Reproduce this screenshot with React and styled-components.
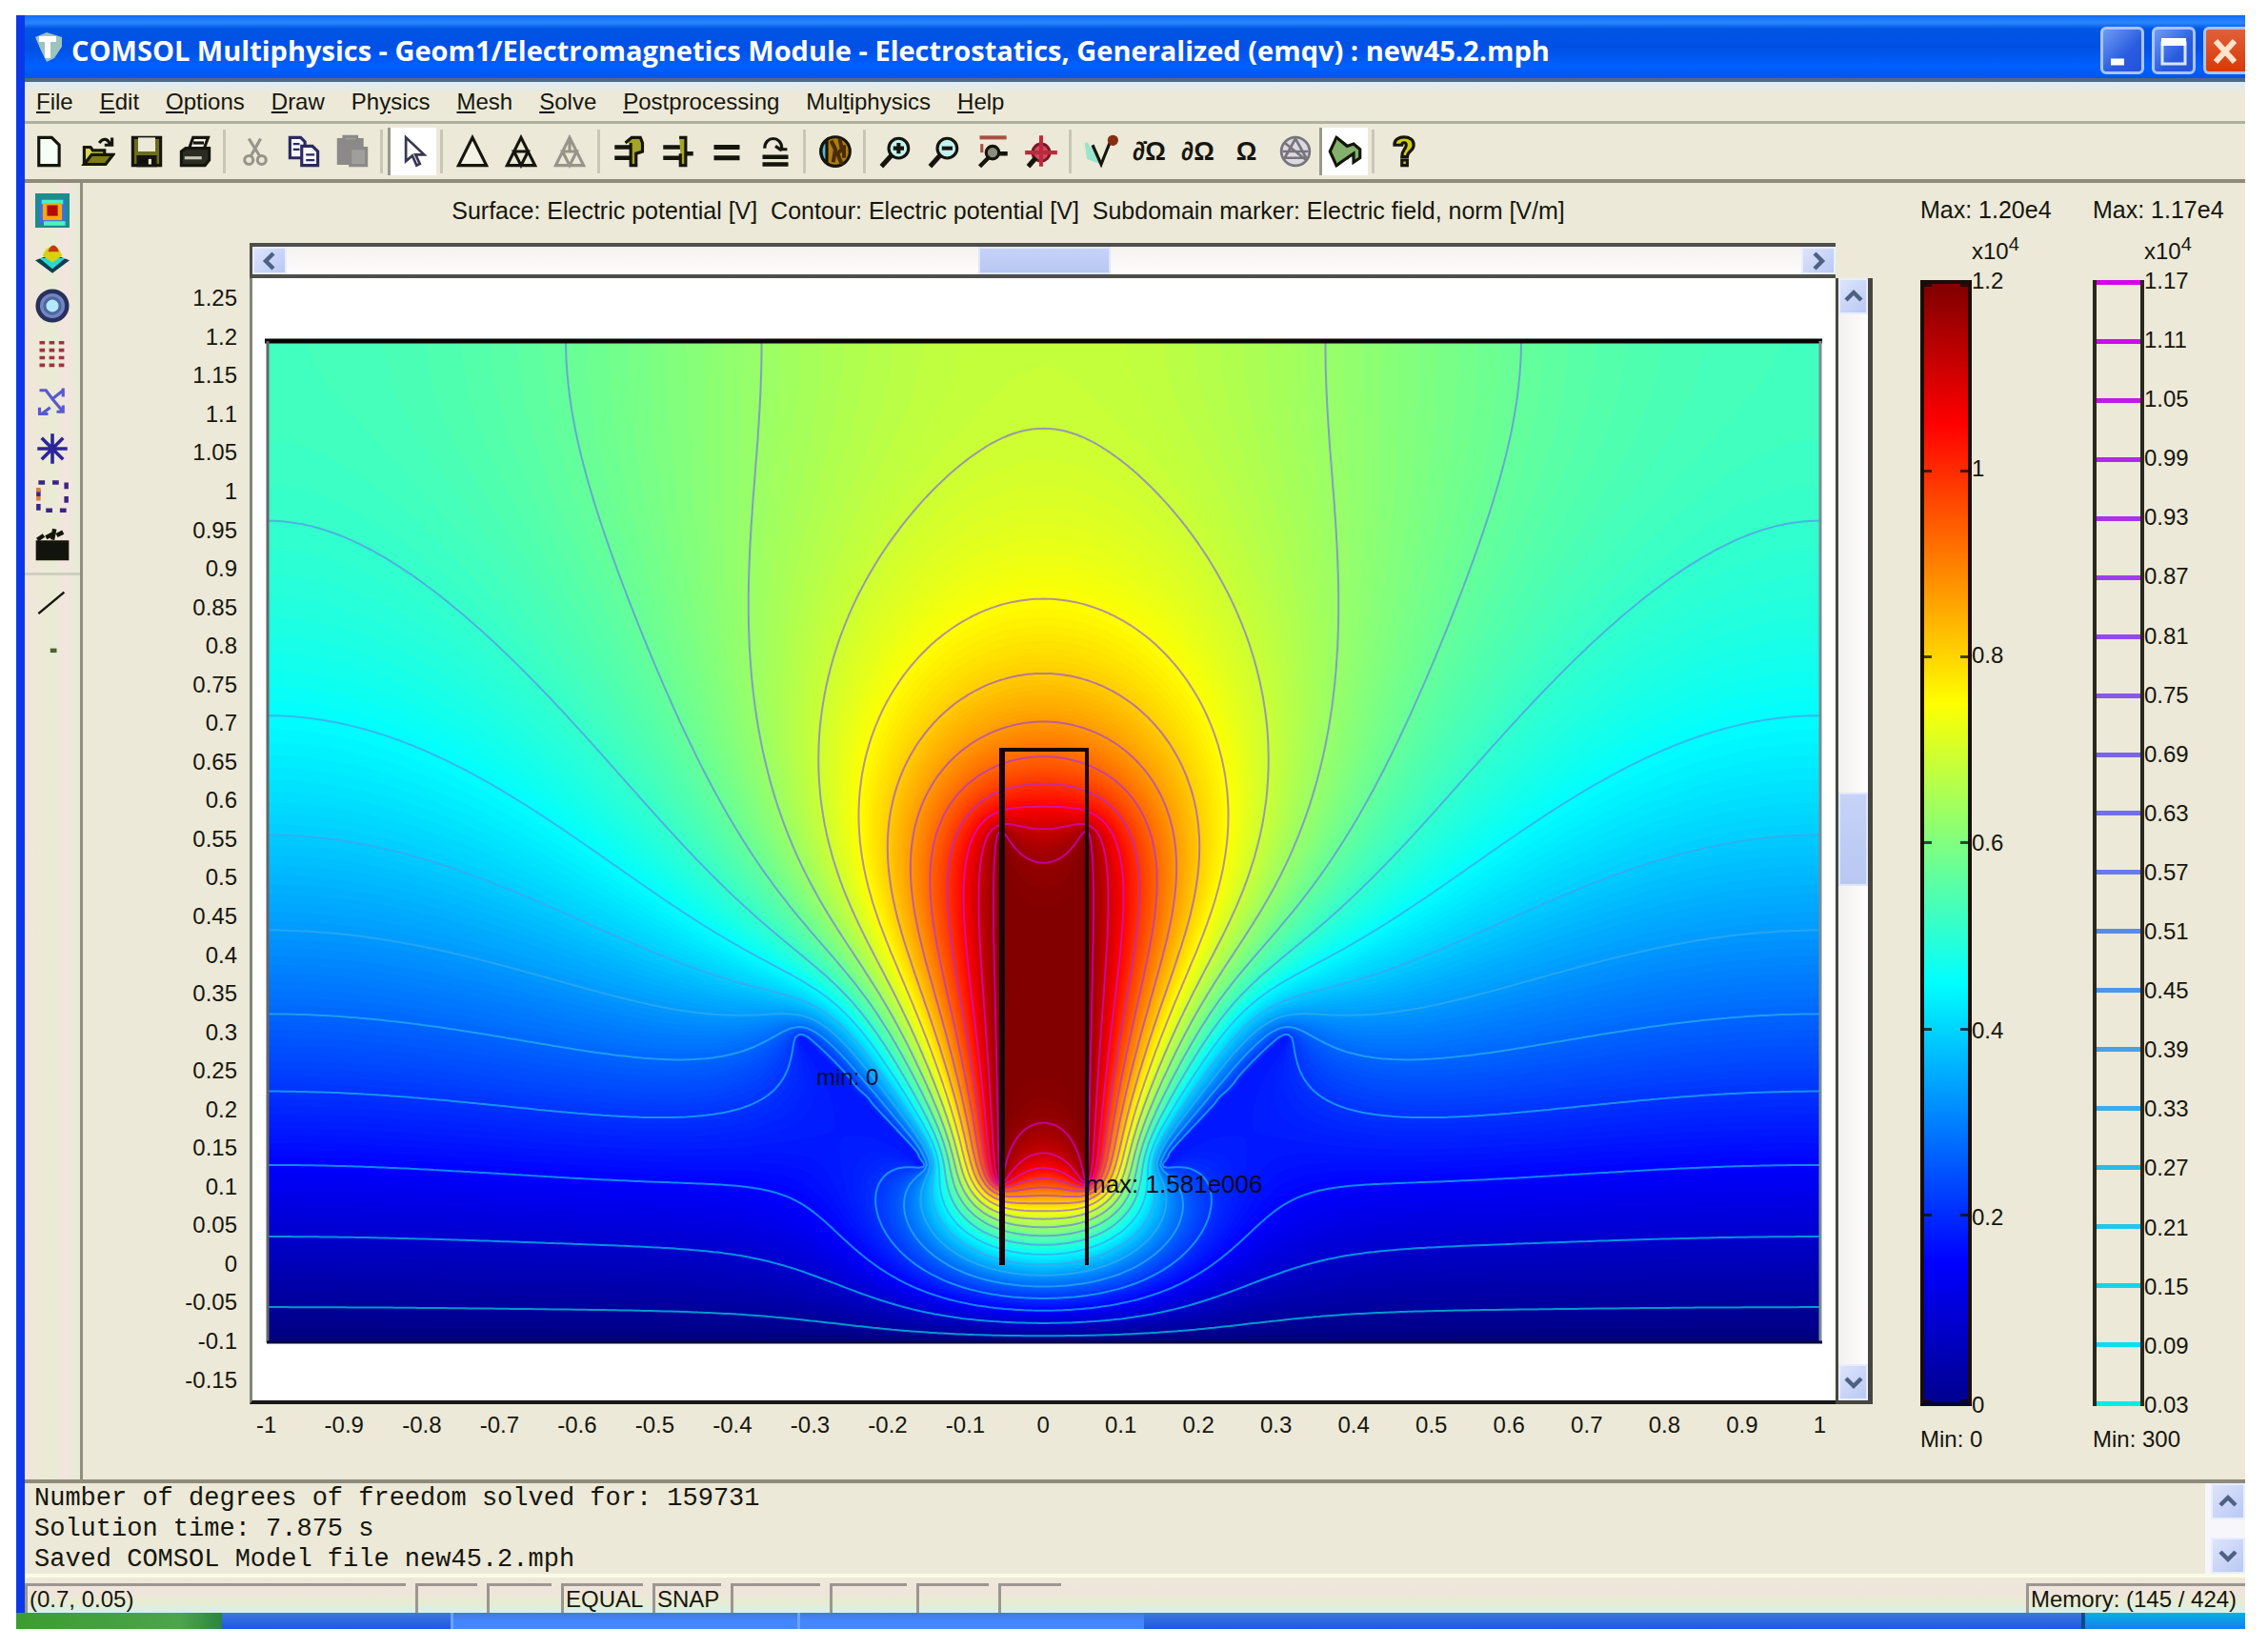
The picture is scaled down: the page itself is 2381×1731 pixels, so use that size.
import { useMemo } from 'react';
import styled, { createGlobalStyle } from 'styled-components';

const GlobalStyle = createGlobalStyle`
  *, *::before, *::after {
    box-sizing: border-box;
  }

  body {
    margin: 0;
    background: #fff;
    color: #16160e;
    font-family: "Liberation Sans", Arial, sans-serif;
    font-size: 24px;
  }

  button {
    margin: 0;
    padding: 0;
    border: 0;
    background: none;
    color: inherit;
    font: inherit;
  }
`

const Page = styled.div`
  padding: 16px 24px 20px 17px;
`

const Window = styled.main`
  display: flex;
  flex-direction: column;
  background: #ece9d8;
  overflow: hidden;
`

const WindowBody = styled.div`
  border-left: 9px solid #0b38e8;
`

/* title bar */

const TitleBar = styled.header`
  display: flex;
  align-items: center;
  height: 70px;
  padding-left: 9px;
  border-bottom: 4px solid #4f6a86;
  background: linear-gradient(#0f6cf8 0, #2a86ff 8px, #0056e4 14px, #0050e4 34px, #0060ff 54px, #0055f0 66px);
  color: #fff;
  overflow: hidden;
`

const Title = styled.h1`
  flex: 1;
  margin: 0 0 0 8px;
  padding-top: 8px;
  font-family: "Open Sans", sans-serif;
  font-size: 29px;
  font-weight: 700;
  line-height: 36px;
  white-space: nowrap;
`

const WindowButtons = styled.div`
  display: flex;
  gap: 8px;
  padding-top: 8px;
`

const WindowButton = styled.button`
  display: flex;
  width: 46px;
  height: 50px;
  border: 3px solid #a8c4ff;
  border-radius: 6px;
  background: ${(props) => (props.$danger ? 'linear-gradient(#e0603a, #d83a08)' : 'linear-gradient(135deg, #6f9cf4, #2a5ce0 60%, #2352d8)')};

  &:last-child {
    width: 44px;
    border-right: 0;
    border-radius: 6px 0 0 6px;
  }
`

/* menu and toolbars */

const MenuBar = styled.nav`
  display: flex;
  align-items: center;
  gap: 28px;
  height: 44px;
  padding-left: 12px;
  border-bottom: 3px solid #aeb0a0;
  background: linear-gradient(#dcecf6, #ece9d8 12px);
`

const MenuItem = styled.button`
  line-height: 28px;
`

const Toolbar = styled.div`
  display: flex;
  align-items: center;
  height: 62px;
  border-bottom: 4px solid #8e8b7a;
`

const ToolButton = styled.button`
  display: flex;
  align-items: center;
  justify-content: center;
  flex: none;
  width: 51px;
  height: 50px;
  background: ${(props) => (props.$pressed ? '#fff' : 'transparent')};
  border-left: ${(props) => (props.$pressed ? '3px solid #9a988a' : '0')};
`

const Separator = styled.span`
  width: 3px;
  height: 46px;
  margin: 0 5px 0 4px;
  background: #c9c6b6;
`

const Main = styled.div`
  display: flex;
`

const SideBar = styled.div`
  display: flex;
  flex-direction: column;
  align-items: center;
  width: 61px;
  padding-top: 4px;
  border-right: 3px solid #908e80;
  background: linear-gradient(90deg, #f4e4dc, #e8ecd4 50%, #f4e4e0 75%, #e4ecd4);
`

const SideButton = styled.button`
  display: flex;
  align-items: center;
  justify-content: center;
  width: 50px;
  height: 50px;
`

const SideRule = styled.span`
  width: 100%;
  height: 3px;
  margin: 5px 0;
  background: #cfcfc0;
`

/* plot */

const PlotPane = styled.section`
  display: grid;
  flex: 1;
  grid-template-columns: 175px minmax(0, 1fr) 39px 50px;
  grid-template-rows: 63px 37px auto 79px;
`

const PlotTitle = styled.h2`
  grid-column: 1 / -1;
  margin: 0;
  padding: 14px 0 0 14px;
  font-size: 25px;
  font-weight: 400;
  line-height: 30px;
  text-align: center;
  white-space: pre;
`

const ScrollX = styled.div`
  display: flex;
  grid-column: 2;
  justify-content: space-between;
  border: solid #4e4e4a;
  border-width: 4px 0 4px 3px;
  background: linear-gradient(#f5f2ef, #fdfdfd);
`

const ScrollY = styled.div`
  display: flex;
  flex-direction: column;
  grid-column: 3;
  justify-content: space-between;
  border: solid #46463f;
  border-width: 0 5px 4px 3px;
  background: linear-gradient(90deg, #f3f0ef, #fdfdfd);
`

const ScrollArrow = styled.button`
  display: flex;
  align-items: center;
  justify-content: center;
  min-width: ${(props) => (props.$tall ? 31 : 36)}px;
  height: ${(props) => (props.$tall ? 38 : 29)}px;
  border: 2px solid #e8eeff;
  background: linear-gradient(135deg, #dde4fb, #b9c9f4);
`

const Thumb = styled.span`
  width: ${(props) => (props.$vertical ? 'auto' : '139px')};
  height: ${(props) => (props.$vertical ? '98px' : 'auto')};
  border: 2px solid #dfe6fc;
  background: linear-gradient(#c6d2f8, #b8c8f2);
`

const YAxis = styled.ol`
  display: flex;
  flex-direction: column;
  grid-column: 1;
  margin: 0;
  padding: 1px 13px 5px 0;
  list-style: none;
`

const YTick = styled.li`
  display: flex;
  flex: 1;
  align-items: center;
  justify-content: flex-end;
  line-height: 28px;
`

const XAxis = styled.ol`
  display: flex;
  grid-column: 1 / -1;
  margin: 0;
  padding: 8px 65px 0 152px;
  list-style: none;
`

const XTick = styled.li`
  flex: 1;
  line-height: 28px;
  text-align: center;
`

const PlotFrame = styled.div`
  grid-column: 2;
  border: solid #1a1816;
  border-width: 0 0 4px 3px;
  border-left-color: #85857c;
  background: #fff;
`

const PlotSvg = styled.svg`
  display: block;
  width: 100%;
  height: auto;
`

/* legends */

const Legend = styled.section`
  display: flex;
  flex-direction: column;
  width: ${(props) => props.$width}px;
`

const LegendHead = styled.div`
  height: 102px;
  padding-top: 14px;
  font-size: 25px;
  line-height: 28px;
  white-space: nowrap;
`

const Exponent = styled.div`
  padding: 14px 0 0 54px;
  font-size: 24px;
  line-height: 32px;
`

const Power = styled.sup`
  font-size: 20px;
  line-height: 0;
`

const LegendBody = styled.div`
  display: flex;
  flex: 1;
`

const ColorBar = styled.div`
  display: flex;
  flex-direction: column;
  justify-content: space-between;
  width: 54px;
  border: 4px solid #1a0c08;
  border-bottom-color: #00003c;
  background: linear-gradient(#800000, #f00 12.5%, #ff0 37.5%, #0ff 62.5%, #00f 87.5%, #00008f);
`

const BarTick = styled.span`
  height: 3px;
  border: solid rgba(20, 10, 10, 0.75);
  border-width: 0 8px;
`

const LineBar = styled.div`
  display: flex;
  flex-direction: column;
  justify-content: space-between;
  width: 54px;
  border: solid #2a271d;
  border-width: 0 4px;
`

const LineKey = styled.span`
  height: 5px;
  background: ${(props) => props.$color};
`

const Scale = styled.ol`
  display: flex;
  flex-direction: column;
  justify-content: space-between;
  margin: -13px 0;
  padding: 0;
  line-height: 28px;
  list-style: none;
`

const LegendFoot = styled.div`
  height: 77px;
  padding-top: 21px;
  line-height: 28px;
`

/* log, status bar and the strip of the task bar under the window */

const Log = styled.div`
  display: flex;
  justify-content: space-between;
  height: 99px;
  border-top: 4px solid #8e8b7a;
`

const LogText = styled.pre`
  margin: 0;
  padding-left: 10px;
  font-family: "Liberation Mono", "Courier New", monospace;
  font-size: 27px;
  line-height: 32px;
`

const LogScroll = styled.div`
  display: flex;
  flex-direction: column;
  justify-content: space-between;
  width: 42px;
  padding-left: 6px;
  background: #f6f6fb;
`

const StatusBar = styled.footer`
  display: flex;
  gap: 10px;
  height: 41px;
  padding-top: 6px;
  border-top: 4px solid #fbfbe6;
  background: linear-gradient(#ece9d8, #f0e4dc 40%, #e8ecd0 70%, #d4f0ee);
`

const StatusCell = styled.span`
  flex: none;
  width: ${(props) => props.$width}px;
  padding-left: 2px;
  border: solid #9c9590;
  border-width: 3px 0 0 3px;
  line-height: 28px;
  white-space: nowrap;

  &:last-child {
    margin-left: auto;
  }
`

const TaskBar = styled.div`
  display: flex;
  height: 17px;
  background: linear-gradient(#4078dc, #1c58e4);
`

const StartButton = styled.button`
  width: 216px;
  background: linear-gradient(90deg, #3c9c30, #4ca44c 80%, #2c8440);
`

const TaskButton = styled.span`
  width: 364px;
  border-left: 3px solid #6aa4ff;
  background: linear-gradient(#4478d8, #4486ff 8px);

  &:first-of-type {
    margin-left: 240px;
  }
`

const Tray = styled.span`
  width: 172px;
  margin-left: auto;
  border-left: 4px solid #0c4a90;
  background: linear-gradient(#08b0e4, #1480ee);
`

const LEVELS = Array.from({ length: 20 }, (_, i) => 300 + i * 600);
const MAX_V = 12000;

// Half of the symmetric domain: x in [0, 1], y in [-0.1, 1.2]
const STEP = 0.005;
const NX = 201;
const NY = 261;

const solvePotential = () => {
  const v = new Float64Array(NX * NY).fill(3000);
  const fixed = new Uint8Array(NX * NY);
  const pin = (i, j, value) => {
    v[j * NX + i] = value;
    fixed[j * NX + i] = 1;
  };

  for (let i = 0; i < NX; i++) pin(i, 0, 0);
  // charged wall of the tube
  for (let j = 42; j <= 132; j++) pin(11, j, MAX_V);
  // floating deflector
  for (let t = 0; t <= 100; t++) {
    const i = Math.round((0.155 + 0.155 * t / 100) / STEP);
    const j = Math.round((0.23 + 0.165 * t / 100) / STEP);
    pin(i, j, 1750);
    pin(i + 1, j, 1750);
  }

  const omega = 1.985;
  for (let n = 0; n < 900; n++) {
    for (let j = 1; j < NY; j++) {
      const up = j === NY - 1 ? -NX : NX;
      for (let i = 0; i < NX; i++) {
        const k = j * NX + i;
        if (fixed[k]) continue;
        const left = i === 0 ? v[k + 1] : v[k - 1];
        const right = i === NX - 1 ? v[k - 1] : v[k + 1];
        v[k] += omega * ((left + right + v[k + up] + v[k - NX]) / 4 - v[k]);
      }
    }
  }
  return v;
};

// Whole domain with a one-node rim of lows, so that every contour closes
const W = NX * 2 + 1;
const H = NY + 2;
const RIM = -1e9;

const padGrid = (v) => {
  const grid = new Float64Array(W * H).fill(RIM);
  for (let j = 0; j < NY; j++) {
    for (let i = 1; i < W - 1; i++) {
      grid[(NY - j) * W + i] = v[j * NX + Math.abs(i - NX)];
    }
  }
  return grid;
};

const PLOT = { x: 15, y: 65, width: 1631, height: 1052 };

const tracePath = (grid, level) => {
  const next = new Map();
  for (let j = 0; j < H - 1; j++) {
    for (let i = 0; i < W - 1; i++) {
      const k = j * W + i;
      const high = [grid[k] >= level, grid[k + 1] >= level, grid[k + W + 1] >= level, grid[k + W] >= level];
      const count = high[0] + high[1] + high[2] + high[3];
      if (count === 0 || count === 4) continue;
      const edges = [k * 2, (k + 1) * 2 + 1, (k + W) * 2, k * 2 + 1];
      for (let a = 0; a < 4; a++) {
        if (!high[a] || high[(a + 1) % 4]) continue;
        let b = (a + 1) % 4;
        while (!high[(b + 1) % 4]) b = (b + 1) % 4;
        next.set(edges[a], edges[b]);
      }
    }
  }

  const point = (edge) => {
    const k = edge >> 1;
    const vertical = edge & 1;
    const a = grid[k];
    const b = grid[vertical ? k + W : k + 1];
    const t = a === RIM || b === RIM ? 0.5 : (level - a) / (b - a);
    const x = (k % W) - 1 + (vertical ? 0 : t);
    const y = Math.floor(k / W) - 1 + (vertical ? t : 0);
    const px = PLOT.x + x / (W - 3) * PLOT.width;
    const py = PLOT.y + y / (H - 3) * PLOT.height;
    return `${px.toFixed(1)} ${py.toFixed(1)}`;
  };

  let d = '';
  while (next.size) {
    let edge = next.keys().next().value;
    const points = [];
    while (next.has(edge)) {
      points.push(point(edge));
      const to = next.get(edge);
      next.delete(edge);
      edge = to;
    }
    d += `M${points.join('L')}Z`;
  }
  return d;
};

const jet = (t) => {
  const channel = (center) => Math.round(255 * Math.max(0, Math.min(1, 1.5 - Math.abs(4 * t - center))));
  return `rgb(${channel(3)}, ${channel(2)}, ${channel(1)})`;
};

const cool = (t) => `rgb(${Math.round(215 * t)}, ${Math.round(235 * (1 - t))}, 235)`;

const BANDS = 200;

const FieldPlot = () => {
  const { bands, contours } = useMemo(() => {
    const grid = padGrid(solvePotential());
    return {
      bands: Array.from({ length: BANDS - 1 }, (_, i) => ({
        d: tracePath(grid, (i + 1) / BANDS * MAX_V),
        fill: jet((i + 1.5) / BANDS),
      })),
      contours: LEVELS.map((level, i) => ({ d: tracePath(grid, level), stroke: cool(i / 19) })),
    };
  }, []);

  return (
    <PlotSvg viewBox="0 0 1662 1178" role="img" aria-label="Electric potential">
      <clipPath id="domain">
        <rect {...PLOT} />
      </clipPath>
      <g clipPath="url(#domain)">
        <rect {...PLOT} fill={jet(0)} />
        {bands.map((band, i) => <path key={i} d={band.d} fill={band.fill} fillRule="evenodd" />)}
        {contours.map((line) => (
          <path key={line.stroke} d={line.d} fill="none" stroke={line.stroke} strokeWidth="2" opacity="0.65" />
        ))}
      </g>
      <path d="M13 66H1648" stroke="#080404" strokeWidth="5" />
      <path d="M16 66V1117" stroke="#66666a" strokeWidth="3" />
      <path d="M1646 66V1117" stroke="#7c8c90" strokeWidth="3" />
      <path d="M15 1117H1648" stroke="#08083c" strokeWidth="3" />
      <path d="M787 1036V495" stroke="#1a0008" strokeWidth="6" />
      <path d="M784 495H876V1036" fill="none" stroke="#1a0008" strokeWidth="4" />
      <text x="592" y="847" fontSize="24" fill="#04103c">min: 0</text>
      <text x="874" y="960" fontSize="26" fill="#0c0c20">max: 1.581e006</text>
    </PlotSvg>
  );
};

const Icon = ({ size = 36, children }) => (
  <svg width={size} height={size} viewBox="0 0 16 16" fill="none" stroke="#15150c" strokeWidth="1.4" aria-hidden="true">
    {children}
  </svg>
);

const Chevron = ({ d }) => (
  <svg width="20" height="20" viewBox="0 0 10 10" fill="none" stroke="#4d6185" strokeWidth="2.2" aria-hidden="true">
    <path d={d} />
  </svg>
);

const lens = (
  <>
    <circle cx="9.5" cy="6.5" r="4.6" fill="#c4f4f0" />
    <path d="M6 10L1.5 15" strokeWidth="2.2" />
  </>
);

const tools = [
  { label: 'New', icon: <path d="M3 1.500h6l3.500 3.500v9.500H3z" fill="#f6fff6" /> },
  {
    label: 'Open',
    icon: <><path d="M1.500 14V6h3l1 1.500H11V10" fill="#d8d850" /><path d="M1.500 14l3.500-4.500h10L11.500 14z" fill="#7c7c18" /><path d="M8.500 4c2-2.500 4-2 5 .5M14.500 1.500v3.500H11" /></>,
  },
  {
    label: 'Save',
    icon: <><path d="M1.500 1.500h13v13h-13z" fill="#6c6c20" /><path d="M4 1.500h8v6.500H4z" fill="#ece9d8" stroke="none" /><path d="M4 10.500h8v4H4z" fill="#101008" /><path d="M9.500 11.500v2.500" stroke="#ece9d8" /></>,
  },
  {
    label: 'Print',
    icon: <><path d="M5 7l2-5.500h7L12 7" fill="#f4f4ec" /><path d="M7 4h5" /><path d="M1.500 8l2-1.500h11V12l-2 2.500h-11z" fill="#2c2c24" /><path d="M3 11h8" stroke="#c8c8b8" /></>,
  },
  null,
  { label: 'Cut', icon: <g stroke="#97958a"><path d="M5 2l5 8M10.500 2L6 10" /><circle cx="5" cy="12" r="2" /><circle cx="11" cy="12" r="2" /></g> },
  {
    label: 'Copy',
    icon: <g stroke="#2c2860"><path d="M1.500 1.500h5l2 2V11h-7z" fill="#f8f8ff" /><path d="M7 5.500h5l2.500 2.500v6.500H7z" fill="#f8f8ff" /><path d="M3 4.500h3M3 7h3M9 9.500h4M9 12h4" strokeWidth="1" /></g>,
  },
  { label: 'Paste', icon: <><path d="M1.500 2.500h11v11h-11z" fill="#8c8a88" stroke="#8c8a88" /><path d="M7 6.500h7.500v8H7zM4 1h6v2H4z" fill="#a19f9c" stroke="#8c8a88" /></> },
  null,
  { label: 'Select', pressed: true, icon: <path d="M4.500 1.500v11l3-2.500 2 4.500 1.500-.8-2-4.200h4z" fill="#fff" stroke="#3a3850" strokeWidth="1.200" /> },
  null,
  { label: 'Initialize mesh', icon: <path d="M8 1.500l6.500 13h-13z" fill="#f4f2e6" /> },
  { label: 'Refine mesh', icon: <path d="M8 1.500l6.500 13h-13zM4.700 8h6.600L8 14.500z" /> },
  { label: 'Refine selection', icon: <g stroke="#97958a"><path d="M8 1.500l6.500 13h-13zM4.700 8h6.600L8 14.500zM8 2v6" /></g> },
  null,
  {
    label: 'Solve settings',
    icon: <><path d="M1 6h7M1 11h7" strokeWidth="2" /><path d="M6 4l3-2.500h4L14 4v4l-3 1v5.500H8.500V4" fill="#a4a428" /></>,
  },
  { label: 'Restart', icon: <><path d="M1 6h8M1 11h8" strokeWidth="2" /><path d="M8.500 1.500h3v13H9V9" fill="#a4a428" /><path d="M12 9h3" strokeWidth="2" /></> },
  { label: 'Solve', icon: <path d="M2 6h12M2 11h12" strokeWidth="2.200" /> },
  { label: 'Update solution', icon: <><path d="M2 10.500h12M2 14h12" strokeWidth="2" /><path d="M3 6.500c0-6 8-6 8 0M11 7.500l-3-2M13.500 7h-4" /></> },
  null,
  {
    label: 'Plot parameters',
    icon: <><circle cx="8" cy="8" r="6.800" fill="#b07c10" /><path d="M4 2.500a7 7 0 0 0 0 11z" fill="#58b8d8" /><path d="M6 3l2 4-1 6M10 2l1 5-2 2 2 5M12 5v6" strokeWidth="1.800" stroke="#4a2c04" /></>,
  },
  null,
  { label: 'Zoom in', icon: <>{lens}<path d="M9.500 4v5M7 6.500h5" strokeWidth="1.800" /></> },
  { label: 'Zoom out', icon: <>{lens}<path d="M7 6.500h5" strokeWidth="1.800" /></> },
  { label: 'Zoom window', icon: <><path d="M2 1.500h12.500" stroke="#a85040" strokeWidth="1.800" /><path d="M3 4.500v4" stroke="#a85040" /><circle cx="8" cy="8.500" r="3" fill="#8c8c80" /><path d="M6 11l-4 4M10.500 9H15" strokeWidth="2" /></> },
  { label: 'Zoom extents', icon: <><circle cx="8" cy="8.500" r="4" fill="#c85060" stroke="#7c1828" /><path d="M8 .5V15M.5 8.500h15" stroke="#c0283c" strokeWidth="1.800" /><path d="M5.500 11L2 15" strokeWidth="2.200" /></> },
  null,
  { label: 'Point mode', icon: <><path d="M1 4l6 9-5-2z" fill="#98e4cc" stroke="#98e4cc" /><path d="M4 5l4 9 4-10" /><circle cx="13.500" cy="2.800" r="1.800" fill="#843010" stroke="#843010" /></> },
  { label: 'Edge mode', glyph: '∂̇Ω' },
  { label: 'Boundary mode', glyph: '∂Ω' },
  { label: 'Subdomain mode', glyph: 'Ω' },
  { label: 'Mesh mode', icon: <g stroke="#77757c" strokeWidth="1.200"><circle cx="8" cy="8" r="6.600" fill="#dcdae0" /><path d="M3 4l10 8M3 11l5-9 5 9zM2 8h12" /></g> },
  { label: 'Postprocessing mode', pressed: true, icon: <><path d="M4 1.500L1 8l3 6.500L8 11h1V5.500z" fill="#84b06c" /><path d="M4 1.500l5 4 3-1 3 2.500v4l-3 2V9l-3 2-5 3.500" fill="#84b06c" /></> },
  null,
  { label: 'Help', icon: <><path d="M3.500 5C3 0 13 0 12.500 5c0 3-3 2.500-3 5.500H7C7 7 9 7 9 5c0-1.500-2-1.500-2 0z" fill="#d0cc10" /><path d="M7 12h2.500v2.500H7z" fill="#d0cc10" /></> },
];

const Omega = styled.span`
  font-size: 27px;
  font-weight: 700;
  line-height: 36px;
`

const plotTools = [
  {
    label: 'Surface plot',
    icon: <g stroke="none"><path d="M0 0h16v16H0z" fill="#1c8c8c" /><path d="M2 3h12v11H2z" fill="#3c6cf0" /><path d="M3 3h10v2H3zM4 13h10v2H4z" fill="#50f0c0" /><path d="M3.500 4.500h9v8h-9z" fill="#f8a808" /><path d="M5.500 5.500h5v5h-5z" fill="#b40c04" /></g>,
  },
  { label: '3D surface', icon: <g stroke="none"><path d="M0 9l8-3 8 3-8 6z" fill="#103c50" /><path d="M2 8h12l-6 5z" fill="#28d8d0" /><path d="M3.500 7C5 1 11 1 12.500 7L8 10z" fill="#d8d010" /><path d="M6 5c1-4 4-4 5 0z" fill="#c83808" /></g> },
  { label: 'Contour plot', icon: <><circle cx="8" cy="8" r="6.800" fill="#7484c4" stroke="#28305c" strokeWidth="2" /><circle cx="8" cy="8" r="3.600" fill="#b4e8fc" stroke="#4c689c" /></> },
  { label: 'Arrow plot', icon: <path d="M2 3h12M2 6.500h12M2 10h12M2 13.500h12" stroke="#9c3440" strokeWidth="1.600" strokeDasharray="2.500 2" /> },
  { label: 'Streamline plot', icon: <path d="M2 3h3l3 4 5-4M13 2v4M3 14l4-3M2 11v3h4M8 7l5 6M10 13h3v-3" stroke="#5858d0" /> },
  { label: 'Particle tracing', icon: <path d="M8 1v14M1 8h14M3 3l10 10M13 3L3 13" stroke="#2c249c" strokeWidth="1.600" /> },
  { label: 'Domain plot', icon: <><path d="M1.500 1.500h13v13h-13z" stroke="#3c2484" strokeWidth="2" strokeDasharray="3 3.500" /><path d="M1.500 4v8" stroke="#d87c40" strokeWidth="2" strokeDasharray="2 2" /></> },
  { label: 'Animate', icon: <><path d="M1 7h14v8H1z" fill="#10140c" /><path d="M1 6l3-2M5 5l3-1.500M10 4l3-1.500M9 1l-1 5" strokeWidth="2" /></> },
];

const menus = [
  ['', 'F', 'ile'],
  ['', 'E', 'dit'],
  ['', 'O', 'ptions'],
  ['', 'D', 'raw'],
  ['Ph', 'y', 'sics'],
  ['', 'M', 'esh'],
  ['', 'S', 'olve'],
  ['', 'P', 'ostprocessing'],
  ['Mul', 't', 'iphysics'],
  ['', 'H', 'elp'],
];

const yTicks = Array.from({ length: 29 }, (_, i) => String(Number((1.25 - i * 0.05).toFixed(2))));
const xTicks = Array.from({ length: 21 }, (_, i) => String(Number((-1 + i * 0.1).toFixed(1))));
const colorTicks = ['1.2', '1', '0.8', '0.6', '0.4', '0.2', '0'];
const lineTicks = LEVELS.map((level) => (level / 10000).toFixed(2)).reverse();

const App = () => (
  <Page>
    <GlobalStyle />
    <Window>
      <WindowBody>
        <TitleBar>
          <Icon size={32}>
            <path d="M1 3l6-2.500 8 2.500v5l-4 6-4 2-3-6z" fill="#9cc4bc" stroke="none" />
            <path d="M3 4h9M7.500 4v10" stroke="#fff" strokeWidth="3" />
          </Icon>
          <Title>COMSOL Multiphysics - Geom1/Electromagnetics Module - Electrostatics, Generalized (emqv) : new45.2.mph</Title>
          <WindowButtons>
            <WindowButton aria-label="Minimize">
              <svg viewBox="0 0 40 44"><path d="M8 34h14" stroke="#fff" strokeWidth="7" /></svg>
            </WindowButton>
            <WindowButton aria-label="Maximize">
              <svg viewBox="0 0 40 44"><path d="M8 14h24v22H8z" fill="none" stroke="#d8e8ff" strokeWidth="3" /><path d="M7 13h26" stroke="#fff" strokeWidth="8" /></svg>
            </WindowButton>
            <WindowButton aria-label="Close" $danger>
              <svg viewBox="0 0 40 44"><path d="M10 12l20 22M30 12L10 34" stroke="#ffe4cc" strokeWidth="6" /></svg>
            </WindowButton>
          </WindowButtons>
        </TitleBar>

        <MenuBar>
          {menus.map(([before, key, after]) => (
            <MenuItem key={before + key + after}>{before}<u>{key}</u>{after}</MenuItem>
          ))}
        </MenuBar>

        <Toolbar role="toolbar">
          {tools.map((tool, i) => (tool ? (
            <ToolButton key={tool.label} aria-label={tool.label} $pressed={tool.pressed}>
              {tool.glyph ? <Omega>{tool.glyph}</Omega> : <Icon>{tool.icon}</Icon>}
            </ToolButton>
          ) : <Separator key={i} />))}
        </Toolbar>

        <Main>
          <SideBar>
            {plotTools.map((tool) => (
              <SideButton key={tool.label} aria-label={tool.label}><Icon>{tool.icon}</Icon></SideButton>
            ))}
            <SideRule />
            <SideButton aria-label="Line"><Icon><path d="M1.500 12.500l12-10" strokeWidth="1.100" /></Icon></SideButton>
            <SideButton aria-label="Point"><Icon><path d="M7 7.500h3" stroke="#4c6430" strokeWidth="2" /></Icon></SideButton>
          </SideBar>

          <PlotPane>
            <PlotTitle>{'Surface: Electric potential [V]  Contour: Electric potential [V]  Subdomain marker: Electric field, norm [V/m]'}</PlotTitle>
            <ScrollX>
              <ScrollArrow aria-label="Scroll left"><Chevron d="M7 1L3 5l4 4" /></ScrollArrow>
              <Thumb />
              <ScrollArrow aria-label="Scroll right"><Chevron d="M3 1l4 4-4 4" /></ScrollArrow>
            </ScrollX>
            <YAxis>
              {yTicks.map((tick) => <YTick key={tick}>{tick}</YTick>)}
            </YAxis>
            <PlotFrame>
              <FieldPlot />
            </PlotFrame>
            <ScrollY>
              <ScrollArrow $tall aria-label="Scroll up"><Chevron d="M1 7l4-4 4 4" /></ScrollArrow>
              <Thumb $vertical />
              <ScrollArrow $tall aria-label="Scroll down"><Chevron d="M1 3l4 4 4-4" /></ScrollArrow>
            </ScrollY>
            <XAxis>
              {xTicks.map((tick) => <XTick key={tick}>{tick}</XTick>)}
            </XAxis>
          </PlotPane>

          <Legend $width={181}>
            <LegendHead>
              Max: 1.20e4
              <Exponent>x10<Power>4</Power></Exponent>
            </LegendHead>
            <LegendBody>
              <ColorBar>
                {colorTicks.map((tick) => <BarTick key={tick} />)}
              </ColorBar>
              <Scale>
                {colorTicks.map((tick) => <li key={tick}>{tick}</li>)}
              </Scale>
            </LegendBody>
            <LegendFoot>Min: 0</LegendFoot>
          </Legend>

          <Legend $width={160}>
            <LegendHead>
              Max: 1.17e4
              <Exponent>x10<Power>4</Power></Exponent>
            </LegendHead>
            <LegendBody>
              <LineBar>
                {lineTicks.map((tick, i) => <LineKey key={tick} $color={cool(1 - i / 19)} />)}
              </LineBar>
              <Scale>
                {lineTicks.map((tick) => <li key={tick}>{tick}</li>)}
              </Scale>
            </LegendBody>
            <LegendFoot>Min: 300</LegendFoot>
          </Legend>
        </Main>

        <Log>
          <LogText>{'Number of degrees of freedom solved for: 159731\nSolution time: 7.875 s\nSaved COMSOL Model file new45.2.mph'}</LogText>
          <LogScroll>
            <ScrollArrow $tall aria-label="Scroll log up"><Chevron d="M1 7l4-4 4 4" /></ScrollArrow>
            <ScrollArrow $tall aria-label="Scroll log down"><Chevron d="M1 3l4 4 4-4" /></ScrollArrow>
          </LogScroll>
        </Log>

        <StatusBar>
          <StatusCell $width={400}>(0.7, 0.05)</StatusCell>
          <StatusCell $width={65}></StatusCell>
          <StatusCell $width={68}></StatusCell>
          <StatusCell $width={86}>EQUAL</StatusCell>
          <StatusCell $width={72}>SNAP</StatusCell>
          <StatusCell $width={94}></StatusCell>
          <StatusCell $width={81}></StatusCell>
          <StatusCell $width={76}></StatusCell>
          <StatusCell $width={66}></StatusCell>
          <StatusCell $width={230}>Memory: (145 / 424)</StatusCell>
        </StatusBar>
      </WindowBody>
      <TaskBar>
        <StartButton aria-label="Start" />
        <TaskButton />
        <TaskButton />
        <Tray />
      </TaskBar>
    </Window>
  </Page>
);

export default App;
